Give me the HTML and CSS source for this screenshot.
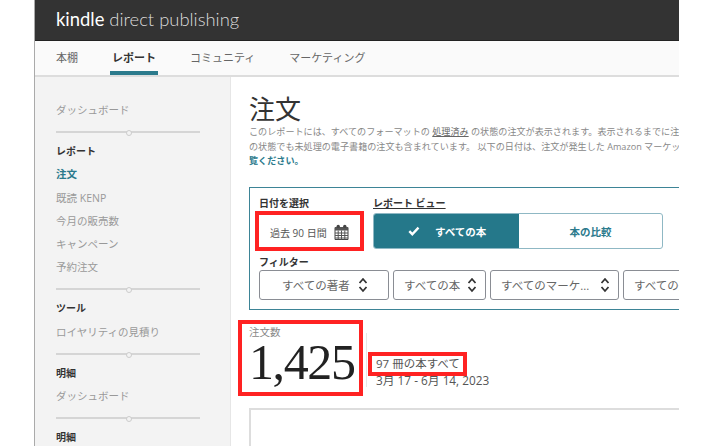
FILE: index.html
```html
<!DOCTYPE html>
<html lang="ja">
<head>
<meta charset="utf-8">
<title>KDP</title>
<link rel="stylesheet" href="styles.css">
</head>
<body>
<div class="app">
  <header class="top"><span class="logo"><b>kindle</b> direct publishing</span></header>
  <nav class="tabs">
    <a class="tab">本棚</a>
    <a class="tab active">レポート</a>
    <a class="tab">コミュニティ</a>
    <a class="tab">マーケティング</a>
  </nav>
  <div class="body">
    <aside class="side">
      <a class="item">ダッシュボード</a>
      <div class="rule"></div>
      <h4 class="head">レポート</h4>
      <a class="item cur">注文</a>
      <a class="item">既読 KENP</a>
      <a class="item">今月の販売数</a>
      <a class="item">キャンペーン</a>
      <a class="item">予約注文</a>
      <div class="rule"></div>
      <h4 class="head">ツール</h4>
      <a class="item">ロイヤリティの見積り</a>
      <div class="rule"></div>
      <h4 class="head">明細</h4>
      <a class="item">ダッシュボード</a>
      <div class="rule"></div>
      <h4 class="head">明細</h4>
    </aside>
    <main class="main">
      <h1 class="title">注文</h1>
      <p class="desc">このレポートには、すべてのフォーマットの <u>処理済み</u> の状態の注文が表示されます。表示されるまでに注文<br>の状態でも未処理の電子書籍の注文も含まれています。 以下の日付は、注文が発生した Amazon マーケットプレイス<br><b class="link">覧ください。</b></p>
      <section class="panel">
        <div class="row">
          <div class="datecol">
            <div class="label">日付を選択</div>
            <div class="date">過去 90 日間
              <svg class="cal" viewBox="0 0 15 16" width="15" height="16"><path d="M1 3.5h13v12H1z" fill="#fff" stroke="#444" stroke-width="1"/><path d="M1 3h13v3.5H1z" fill="#555"/><path d="M1 9h13M1 11.5h13M1 14h13M4.2 6.5v9M7.5 6.5v9M10.8 6.5v9" fill="none" stroke="#555" stroke-width="1"/><circle cx="4.2" cy="2.4" r="1.7" fill="#444"/><circle cx="10.8" cy="2.4" r="1.7" fill="#444"/></svg>
            </div>
          </div>
          <div class="viewcol">
            <div class="label under">レポート ビュー</div>
            <div class="seg">
              <div class="on"><svg viewBox="0 0 12 10" width="12" height="10"><path d="M1.3 5.2l3 3 6.2-6.6" fill="none" stroke="#fff" stroke-width="2.4"/></svg><span>すべての本</span></div>
              <div class="off">本の比較</div>
            </div>
          </div>
        </div>
        <div class="label filter">フィルター</div>
        <div class="selects">
          <div class="sel s1"><span>すべての著者</span><svg class="ud" viewBox="0 0 10 16" width="10" height="16"><path d="M1.5 6l3.5-4 3.5 4M1.5 10l3.5 4 3.5-4" fill="none" stroke="#333" stroke-width="1.8"/></svg></div>
          <div class="sel s2"><span>すべての本</span><svg class="ud" viewBox="0 0 10 16" width="10" height="16"><path d="M1.5 6l3.5-4 3.5 4M1.5 10l3.5 4 3.5-4" fill="none" stroke="#333" stroke-width="1.8"/></svg></div>
          <div class="sel s3"><span>すべてのマーケ...</span><svg class="ud" viewBox="0 0 10 16" width="10" height="16"><path d="M1.5 6l3.5-4 3.5 4M1.5 10l3.5 4 3.5-4" fill="none" stroke="#333" stroke-width="1.8"/></svg></div>
          <div class="sel s4"><span>すべての形式</span></div>
        </div>
      </section>
      <section class="stats">
        <div class="count">
          <div class="countlabel">注文数</div>
          <div class="num">1,425</div>
        </div>
        <div class="meta">
          <div class="books">97 冊の本すべて</div>
          <div class="range">3月 17 - 6月 14, 2023</div>
        </div>
      </section>
      <div class="chart"></div>
    </main>
  </div>
  <div class="mark m1"></div>
  <div class="mark m2"></div>
  <div class="mark m3"></div>
</div>
</body>
</html>
```
FILE: styles.css
```css
* { box-sizing: border-box; }
html, body { margin: 0; height: 100%; background: #fff; overflow: hidden; }
body { font-family: "Open Sans", "Noto Sans CJK JP", sans-serif; color: #555; }
.app { position: relative; width: 645px; height: 446px; margin-left: 34px; overflow: hidden; border-left: 1px solid #aaa; }
.top { height: 41px; background: #333; border-bottom: 1px solid #222; padding: 5px 0 0 21px; }
.logo { font: 300 18.4px/28px "Lato", "Open Sans", sans-serif; color: #ddd; }
.logo b { font-weight: 400; color: #fff; }
.tabs { display: flex; height: 36px; background: #fafafa; border-bottom: 2px solid #ddd; padding-left: 21px; font-size: 11px; color: #666; }
.tab { position: relative; line-height: 34px; margin-right: 34px; }
.tab.active { font-weight: 700; color: #333; }
.tab.active::after { content: ""; position: absolute; left: -2px; right: -2px; bottom: 0; height: 4px; background: #2b7a8c; }
.body { display: flex; height: 369px; }
.side { width: 196px; flex: none; background: #f3f3f3; border-right: 1px solid #e6e6e6; padding: 23px 0 0 21px; font-size: 10.5px; }
.item { display: block; height: 23.3px; line-height: 20px; color: #999; }
.item.cur { color: #2b7a8c; font-weight: 700; }
.rule { position: relative; width: 144px; height: 2px; background: #d5d5d5; margin: 7.5px 0 8px; }
.rule::after { content: ""; position: absolute; left: 70px; top: -1px; width: 4px; height: 4px; border: 1px solid #ccc; border-radius: 50%; background: #f3f3f3; }
.head { margin: 0 0 3.5px; height: 20px; font-size: 10px; line-height: 20px; color: #333; font-weight: 700; }
.main { flex: 1; min-width: 0; padding: 14px 0 0 18px; }
.title { margin: 0; font: 400 26px/34px "Noto Sans CJK JP", sans-serif; color: #333; }
.desc { margin: 0; width: 560px; white-space: nowrap; font-size: 9.1px; line-height: 14.5px; color: #888; }
.desc u { color: #666; }
.link { color: #2b7a8c; }
.panel { width: 470px; height: 123px; margin-top: 18.5px; border: 1px solid #3d8496; padding: 8px 9px 0; }
.row { display: flex; }
.datecol { width: 114px; }
.label { font-size: 10px; font-weight: 700; line-height: 14px; color: #333; }
.under { text-decoration: underline; }
.date { display: flex; align-items: center; height: 44px; padding-left: 11px; font-size: 10px; color: #555; }
.cal { margin-left: 7px; }
.seg { display: flex; width: 290px; height: 36px; margin-top: 3px; border: 1px solid #8fb8c4; border-radius: 3px; overflow: hidden; font-size: 10.5px; font-weight: 700; }
.on { width: 145px; background: #25788a; color: #fff; display: flex; align-items: center; gap: 15px; padding-left: 34px; }
.off { flex: 1; display: flex; align-items: center; justify-content: center; color: #2b7a8c; }
.filter { margin-top: 1px; }
.selects { display: flex; gap: 4px; margin-top: 1px; width: 480px; }
.sel { flex: none; display: flex; align-items: center; justify-content: space-between; height: 30px; border: 1px solid #8a8d94; border-radius: 3px; font-size: 11.5px; color: #666; white-space: nowrap; overflow: hidden; }
.s1 { width: 130px; padding: 0 20px 0 22px; }
.s2 { width: 93px; padding: 0 8px 0 10px; }
.s3 { width: 129px; padding: 0 8px 0 10px; }
.s4 { width: 100px; padding: 0 0 0 10px; }
.stats { display: flex; margin-top: 9px; }
.count { width: 117px; padding-top: 7px; }
.countlabel { font-size: 10.5px; line-height: 12px; color: #888; }
.num { font: 400 50px/46px "Liberation Serif", serif; color: #222; letter-spacing: -1.4px; margin-top: 1px; white-space: nowrap; }
.meta { border-left: 1px solid #e6e6e6; height: 54px; margin-top: 14px; padding: 22px 0 0 9px; line-height: 17px; color: #555; white-space: nowrap; }
.books { font-size: 11.5px; }
.range { font-size: 11.8px; }
.chart { width: 470px; height: 60px; margin-top: 21px; border: 1px solid #ddd; border-width: 2px 0 0 2px; }
.mark { position: absolute; border: 4px solid #f22; }
.m1 { left: 220px; top: 211px; width: 109px; height: 40px; }
.m2 { left: 203px; top: 320px; width: 125px; height: 76px; }
.m3 { left: 333px; top: 352px; width: 99px; height: 24px; }
```
